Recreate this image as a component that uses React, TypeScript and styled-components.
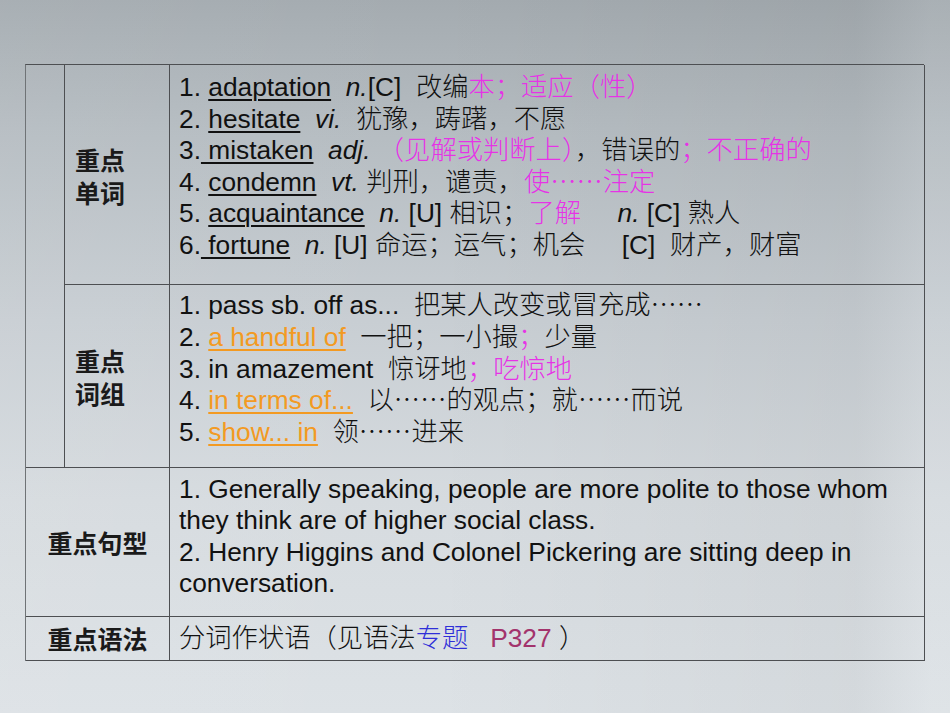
import React from 'react';
import styled, { createGlobalStyle } from 'styled-components';

const MAGENTA = '#e633e6';
const ORANGE = '#f39a22';
const BLUE = '#2f2fd8';
const MAROON = '#a3336c';

const GlobalStyle = createGlobalStyle`
  html, body {
    margin: 0;
    padding: 0;
  }
  body {
    background: #c9cfd3;
  }
`;

const Slide = styled.div`
  width: 950px;
  height: 713px;
  box-sizing: border-box;
  padding: 64px 0 0 25px;
  overflow: hidden;
  background:
    linear-gradient(90deg, rgba(255, 255, 255, 0.05) 0%, rgba(255, 255, 255, 0) 45%, rgba(0, 0, 0, 0.04) 90%, rgba(255, 255, 255, 0.06) 98%),
    linear-gradient(180deg, #a4abb0 0%, #b5bcc1 18%, #c8ced3 45%, #d6dbdf 70%, #dde2e6 100%);
  font-family: 'Liberation Sans', 'Noto Sans CJK SC', sans-serif;
  color: #111;
`;

const Sheet = styled.div`
  width: 899px;
  display: grid;
  grid-template-columns: 39px 105px 755px;
  grid-template-rows: 220px 183px 149px 44px;
  border-top: 1px solid #4d4f52;
  border-left: 1px solid #6f7376;
  box-sizing: border-box;
`;

const Cell = styled.div`
  box-sizing: border-box;
  border-right: 1px solid #4d4f52;
  border-bottom: 1px solid #4d4f52;
`;

const Side = styled(Cell)`
  grid-column: 1;
  grid-row: 1 / span 2;
`;

const Label = styled(Cell)`
  display: flex;
  align-items: center;
  padding: 2px 0 0 10px;
  font-family: 'Noto Sans CJK SC', sans-serif;
  font-weight: 700;
  font-size: 25px;
  line-height: 33px;
  color: #1a1a1a;
`;

const WideLabel = styled(Label)`
  grid-column: 1 / span 2;
  justify-content: center;
  padding: 0;
`;

// weight 300 keeps Liberation at regular while the CJK fallback goes light
const Content = styled(Cell)<{ $center?: boolean; $top?: number }>`
  padding: ${({ $top }) => $top ?? 6}px 6px 0 9px;
  font-size: 26.3px;
  font-weight: 300;
  line-height: 31.4px;
  display: flex;
  flex-direction: column;
  justify-content: ${({ $center }) => ($center ? 'center' : 'flex-start')};
  ${({ $center }) => ($center && 'padding-top: 0;')}
`;

const Line = styled.div<{ $h?: number }>`
  white-space: pre;
  height: ${({ $h }) => $h ?? 31.6}px;
  line-height: ${({ $h }) => $h ?? 31.6}px;
`;

const Sentence = styled.div`
  white-space: normal;
`;

const Term = styled.span<{ $orange?: boolean }>`
  text-decoration: underline;
  text-decoration-thickness: 2px;
  text-underline-offset: 3px;
  color: ${({ $orange }) => ($orange ? ORANGE : 'inherit')};
`;

const Abbr = styled.i`
  font-style: italic;
`;

const Hl = styled.span<{ $c: string }>`
  color: ${({ $c }) => $c};
`;

// centred CJK ellipsis; zero line-height so it never grows the line box
const Zh = styled.span`
  font-family: 'Noto Sans CJK SC', sans-serif;
  line-height: 0;
`;

const Dots = () => <Zh>……</Zh>;

export default function App() {
  return (
    <>
      <GlobalStyle />
      <Slide>
        <Sheet>
          <Side />
          <Label>
            <div>重点<br />单词</div>
          </Label>
          <Content $top={7}>
            <Line>1. <Term>adaptation</Term>{'  '}<Abbr>n.</Abbr>[C]{'  '}改编<Hl $c={MAGENTA}>本；适应（性）</Hl></Line>
            <Line>2. <Term>hesitate</Term>{'  '}<Abbr>vi.</Abbr>{'  '}犹豫，踌躇，不愿</Line>
            <Line>3.<Term> mistaken</Term>{'  '}<Abbr>adj.</Abbr>{' '}<Hl $c={MAGENTA}>（见解或判断上）</Hl>，错误的<Hl $c={MAGENTA}>；不正确的</Hl></Line>
            <Line>4. <Term>condemn</Term>{'  '}<Abbr>vt.</Abbr>{' '}判刑，谴责，<Hl $c={MAGENTA}>使<Dots />注定</Hl></Line>
            <Line>5. <Term>acquaintance</Term>{'  '}<Abbr>n.</Abbr> [U] 相识；<Hl $c={MAGENTA}>了解</Hl>{'     '}<Abbr>n.</Abbr> [C] 熟人</Line>
            <Line>6.<Term> fortune</Term>{'  '}<Abbr>n.</Abbr> [U] 命运；运气；机会{'     '}[C]{'  '}财产，财富</Line>
          </Content>

          <Label>
            <div>重点<br />词组</div>
          </Label>
          <Content $top={5}>
            <Line $h={31.8}>1. pass sb. off as...{'  '}把某人改变或冒充成<Dots /></Line>
            <Line $h={31.8}>2. <Term $orange>a handful of</Term>{'  '}一把；一小撮<Hl $c={MAGENTA}>；</Hl>少量</Line>
            <Line $h={31.8}>3. in amazement{'  '}惊讶地<Hl $c={MAGENTA}>；吃惊地</Hl></Line>
            <Line $h={31.8}>4. <Term $orange>in terms of...</Term>{'  '}以<Dots />的观点；就<Dots />而说</Line>
            <Line $h={31.8}>5. <Term $orange>show... in</Term>{'  '}领<Dots />进来</Line>
          </Content>

          <WideLabel>重点句型</WideLabel>
          <Content>
            <Sentence>1. Generally speaking, people are more polite to those whom they think are of higher social class.</Sentence>
            <Sentence>2. Henry Higgins and Colonel Pickering are sitting deep in conversation.</Sentence>
          </Content>

          <WideLabel>重点语法</WideLabel>
          <Content $center>
            <Line>分词作状语（见语法<Hl $c={BLUE}>专题</Hl>{'   '}<Hl $c={MAROON}>P327</Hl>{' '}）</Line>
          </Content>
        </Sheet>
      </Slide>
    </>
  );
}
